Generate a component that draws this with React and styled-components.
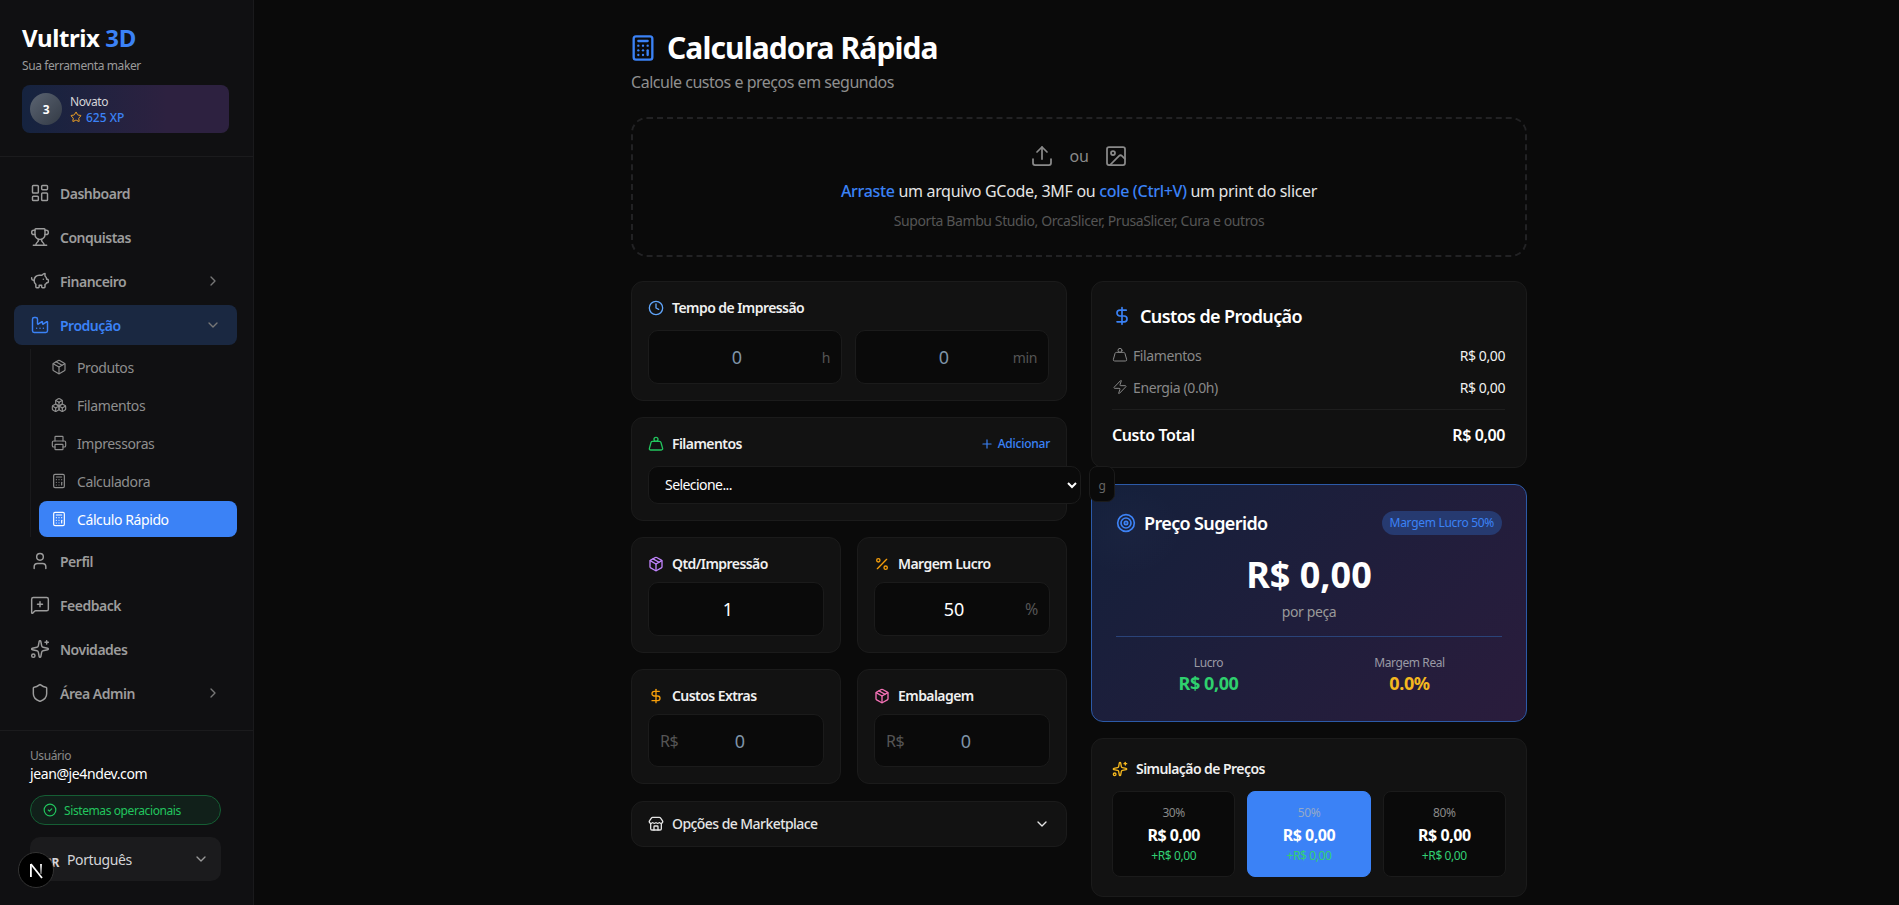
import styled, { createGlobalStyle } from "styled-components";
import {
  Boxes,
  Calculator,
  ChevronDown,
  ChevronRight,
  CircleCheck,
  Clock,
  DollarSign,
  Factory,
  Image,
  LayoutDashboard,
  MessageSquarePlus,
  Package,
  Percent,
  PiggyBank,
  Plus,
  Printer,
  Shield,
  Sparkles,
  Star,
  Store,
  Target,
  Trophy,
  Upload,
  User,
  Weight,
  Zap,
} from "lucide-react";

const GlobalStyle = createGlobalStyle`
  * { box-sizing: border-box; }
  html, body { margin: 0; height: 100%; background: #0a0a0a; }
  body {
    font-family: "Noto Sans", "Open Sans", sans-serif;
    letter-spacing: -0.025em;
    color: #fff;
    overflow: hidden;
  }
`;

const Page = styled.div`
  display: flex;
  height: 905px;
  overflow: hidden;
`;

const Sidebar = styled.aside`
  width: 254px;
  flex-shrink: 0;
  display: flex;
  flex-direction: column;
  background: #101012;
  border-right: 1px solid #1a1a1c;
`;

const Brand = styled.div`
  padding: 22px 24px 23px 22px;
  border-bottom: 1px solid #1b1b1d;
`;

const Logo = styled.div`
  font-size: 24px;
  line-height: 32px;
  font-weight: 700;
  span { color: #3b82f6; }
`;

const Tagline = styled.div`
  margin-top: 4px;
  font-size: 12px;
  line-height: 16px;
  color: #9a9a9a;
`;

const LevelCard = styled.div`
  margin-top: 11px;
  height: 48px;
  padding: 0 8px;
  display: flex;
  align-items: center;
  gap: 8px;
  border-radius: 8px;
  background: linear-gradient(90deg, #15233f, #2d2140 70%, #2d2140);
`;

const LevelBadge = styled.div`
  width: 32px;
  height: 32px;
  border-radius: 50%;
  display: flex;
  align-items: center;
  justify-content: center;
  font-size: 12px;
  font-weight: 700;
  background: linear-gradient(135deg, #5b6472, #333a45);
`;

const LevelName = styled.div`
  font-size: 12px;
  line-height: 16px;
  color: #d4d4d8;
`;

const LevelXp = styled.div`
  display: flex;
  align-items: center;
  gap: 4px;
  font-size: 12px;
  line-height: 15px;
  font-weight: 500;
  letter-spacing: 0;
  color: #3b82f6;
  svg { color: #f5a524; }
`;

const Nav = styled.nav`
  flex: 1;
  padding: 16px 16px 16px 14px;
  display: flex;
  flex-direction: column;
  gap: 4px;
`;

const NavItem = styled.div`
  height: 40px;
  padding: 0 16px;
  display: flex;
  align-items: center;
  gap: 10px;
  border-radius: 8px;
  font-size: 14px;
  font-weight: 600;
  letter-spacing: -0.035em;
  color: ${(p) => (p.$active ? "#3b82f6" : "#9c9c9c")};
  background: ${(p) => (p.$active ? "#1a2841" : "transparent")};
  > svg:last-child:not(:first-child) {
    margin-left: auto;
    color: #777;
  }
`;

const SubList = styled.div`
  margin-left: 16px;
  padding-left: 8px;
  border-left: 1px solid #1a1a1c;
  display: flex;
  flex-direction: column;
  gap: 2px;
`;

const SubItem = styled.div`
  height: 36px;
  padding: 0 12px;
  display: flex;
  align-items: center;
  gap: 10px;
  border-radius: 8px;
  font-size: 14px;
  color: ${(p) => (p.$active ? "#fff" : "#8e8e8e")};
  background: ${(p) => (p.$active ? "#3b82f6" : "transparent")};
`;

const SideFooter = styled.div`
  padding: 17px 32px 0 30px;
  border-top: 1px solid #1b1b1d;
  height: 175px;
`;

const UserLabel = styled.div`
  font-size: 12px;
  line-height: 16px;
  color: #8a8a8a;
`;

const UserMail = styled.div`
  font-size: 14px;
  line-height: 20px;
  color: #fff;
`;

const StatusPill = styled.div`
  margin-top: 11px;
  height: 30px;
  padding: 0 12px;
  display: flex;
  align-items: center;
  gap: 7px;
  border-radius: 15px;
  font-size: 12px;
  color: #22c55e;
  background: #11201a;
  border: 1px solid #155e34;
`;

const LangSelect = styled.div`
  margin-top: 12px;
  height: 44px;
  padding: 0 12px 0 14px;
  display: flex;
  align-items: center;
  border-radius: 10px;
  background: #1b1b1d;
  font-size: 14px;
  color: #d4d4d8;
  b {
    width: 23px;
    font-size: 12px;
    padding-top: 6px;
  }
  svg {
    margin-left: auto;
    color: #999;
  }
`;

const DevBadge = styled.div`
  position: absolute;
  left: 18px;
  top: 852px;
  width: 36px;
  height: 36px;
  border-radius: 50%;
  background: #000;
  border: 1px solid #333;
  svg { display: block; }
`;

const Main = styled.main`
  flex: 1;
  min-width: 0;
  padding: 30px 0 0 5px;
`;

const Content = styled.div`
  width: 896px;
  margin: 0 auto;
`;

const PageTitle = styled.h1`
  margin: 0;
  display: flex;
  align-items: center;
  gap: 10px;
  font-size: 30px;
  line-height: 36px;
  font-weight: 700;
  letter-spacing: -0.03em;
  svg {
    margin-left: -2px;
    color: #3b82f6;
  }
`;

const PageSubtitle = styled.p`
  margin: 4px 0 0;
  font-size: 16px;
  line-height: 24px;
  letter-spacing: -0.03em;
  color: #8f8f8f;
`;

const DropZone = styled.div`
  margin-top: 23px;
  height: 140px;
  display: flex;
  flex-direction: column;
  align-items: center;
  padding-top: 25px;
  border: 2px dashed #222224;
  border-radius: 16px;
`;

const DropIcons = styled.div`
  display: flex;
  align-items: center;
  gap: 16px;
  height: 24px;
  color: #8a8a8a;
  font-size: 16px;
`;

const DropText = styled.div`
  margin-top: 11px;
  font-size: 16px;
  line-height: 24px;
  letter-spacing: -0.02em;
  color: #e5e5e5;
  strong {
    color: #3b82f6;
    font-weight: 500;
  }
`;

const DropHint = styled.div`
  margin-top: 8px;
  font-size: 14px;
  line-height: 20px;
  color: #555;
`;

const Columns = styled.div`
  margin-top: 24px;
  display: grid;
  grid-template-columns: 436px 436px;
  gap: 24px;
  align-items: start;
`;

const Stack = styled.div`
  display: flex;
  flex-direction: column;
  gap: 16.2px;
`;

const Pair = styled.div`
  display: grid;
  grid-template-columns: 210px 210px;
  gap: 16px;
`;

const Card = styled.section`
  padding: 16px;
  border-radius: 12px;
  background: #121212;
  border: 1px solid #1b1b1b;
`;

const CardHead = styled.div`
  height: 20px;
  margin-bottom: ${(p) => p.$gap || 8}px;
  display: flex;
  align-items: center;
  gap: 8px;
  font-size: 14px;
  line-height: 20px;
  font-weight: 600;
  letter-spacing: -0.04em;
  color: #f0f0f0;
`;

const AddLink = styled.span`
  margin-left: auto;
  display: flex;
  align-items: center;
  gap: 4px;
  font-size: 12px;
  font-weight: 500;
  letter-spacing: -0.02em;
  color: #3b82f6;
`;

const FieldRow = styled.div`
  display: grid;
  grid-template-columns: 194px 194px;
  gap: 13px;
`;

const Field = styled.div`
  position: relative;
`;

const NumberInput = styled.input`
  width: 100%;
  height: 53.6px;
  padding: 0 32px 0 ${(p) => (p.$prefixed ? 40 : 16)}px;
  text-align: center;
  font-family: inherit;
  font-size: 18px;
  color: #fff;
  background: #0a0a0a;
  border: 1px solid #1b1b1b;
  border-radius: 10px;
  outline: none;
  &::placeholder {
    color: #7f93a8;
    opacity: 1;
  }
`;

const Affix = styled.span`
  position: absolute;
  top: 50%;
  transform: translateY(-50%);
  ${(p) => (p.$left ? "left: 12px;" : "right: 12px;")}
  font-size: ${(p) => p.$size || 14}px;
  color: #555;
`;

const FilamentRow = styled.div`
  display: flex;
  gap: 8px;
`;

const FilamentSelect = styled.select`
  width: 433px;
  flex-shrink: 0;
  height: 38px;
  padding: 0 12px;
  font-family: inherit;
  font-size: 14px;
  letter-spacing: -0.04em;
  color: #fff;
  background: #0a0a0a;
  border: 1px solid #1b1b1b;
  border-radius: 10px;
  outline: none;
  color-scheme: dark;
`;

const UnitBox = styled.div`
  width: 26px;
  height: 36px;
  padding-top: 4px;
  flex-shrink: 0;
  display: flex;
  align-items: center;
  justify-content: center;
  font-size: 12px;
  color: #666;
  background: #0a0a0a;
  border: 1px solid #1b1b1b;
  border-radius: 8px;
  position: relative;
  z-index: 2;
`;

const Collapse = styled.section`
  height: 46px;
  padding: 0 16px;
  display: flex;
  align-items: center;
  gap: 8px;
  font-size: 14px;
  font-weight: 500;
  letter-spacing: -0.04em;
  color: #e5e5e5;
  border-radius: 12px;
  background: #121212;
  border: 1px solid #1b1b1b;
  > svg:last-child { margin-left: auto; }
`;

const CostCard = styled(Card)`
  height: 186.5px;
  padding: 20px 21px 20px 20px;
  background: #111;
`;

const CostTitle = styled.h2`
  margin: 0 0 15px;
  display: flex;
  align-items: center;
  gap: 8px;
  font-size: 18px;
  line-height: 28px;
  font-weight: 600;
  letter-spacing: -0.035em;
  svg { color: #3b82f6; }
`;

const CostRow = styled.div`
  height: 20px;
  margin-bottom: 12px;
  display: flex;
  align-items: center;
  justify-content: space-between;
  font-size: 14px;
  color: #f0f0f0;
`;

const CostLabel = styled.span`
  display: flex;
  align-items: center;
  gap: 5px;
  color: #888;
`;

const CostTotal = styled.div`
  margin-top: 1px;
  padding-top: 13px;
  display: flex;
  justify-content: space-between;
  font-size: 16px;
  line-height: 24px;
  font-weight: 600;
  border-top: 1px solid #1e1e1e;
`;

const PriceCard = styled.section`
  position: relative;
  overflow: hidden;
  height: 238.5px;
  padding: 24px;
  border-radius: 12px;
  border: 1px solid #2c5aa8;
  background: linear-gradient(135deg, #14203b, #2a1c3c);
`;

const PriceGlow = styled.div`
  position: absolute;
  top: 0;
  left: -20px;
  width: 110px;
  height: 90px;
  border-radius: 50%;
  background: radial-gradient(closest-side, rgba(120, 140, 190, 0.03), transparent);
  pointer-events: none;
`;

const PriceHead = styled.div`
  display: flex;
  align-items: center;
  gap: 8px;
  height: 28px;
  font-size: 18px;
  font-weight: 600;
  letter-spacing: -0.035em;
  svg { color: #3b82f6; }
`;

const MarginTag = styled.span`
  margin-left: auto;
  height: 24px;
  padding: 0 8px;
  display: flex;
  align-items: center;
  font-size: 12px;
  font-weight: 400;
  letter-spacing: -0.025em;
  color: #3b82f6;
  background: #263a70;
  border-radius: 12px;
`;

const BigPrice = styled.div`
  margin-top: 14px;
  text-align: center;
  font-size: 36px;
  line-height: 48px;
  font-weight: 700;
  letter-spacing: 0;
`;

const PerPiece = styled.div`
  margin-top: 3px;
  text-align: center;
  font-size: 14px;
  line-height: 20px;
  color: #999;
`;

const PriceStats = styled.div`
  margin-top: 14px;
  padding-top: 18px;
  display: grid;
  grid-template-columns: 1fr 1fr;
  gap: 16px;
  border-top: 1px solid #2a4379;
  text-align: center;
`;

const StatLabel = styled.div`
  font-size: 12px;
  line-height: 16px;
  color: #9a9aa5;
`;

const StatValue = styled.div`
  font-size: 18px;
  line-height: 24px;
  font-weight: 700;
  color: ${(p) => p.$color};
`;

const SimCard = styled(Card)`
  height: 159px;
  padding: 20px;
`;

const SimGrid = styled.div`
  display: grid;
  grid-template-columns: repeat(3, 1fr);
  gap: 12px;
`;

const SimCell = styled.div`
  height: 86px;
  padding-top: 13px;
  text-align: center;
  border-radius: 8px;
  background: ${(p) => (p.$active ? "#3b82f6" : "#0a0a0a")};
  border: 1px solid ${(p) => (p.$active ? "#3b82f6" : "#1b1b1b")};
`;

const SimPercent = styled.div`
  font-size: 12px;
  line-height: 16px;
  color: ${(p) => (p.$active ? "#93a9c9" : "#888")};
`;

const SimPrice = styled.div`
  margin-top: 4px;
  font-size: 16px;
  line-height: 20px;
  font-weight: 700;
  letter-spacing: -0.03em;
`;

const SimGain = styled.div`
  margin-top: 1px;
  font-size: 12px;
  line-height: 20px;
  color: #32d074;
`;

const mainNav = [
  { label: "Dashboard", icon: LayoutDashboard },
  { label: "Conquistas", icon: Trophy },
  { label: "Financeiro", icon: PiggyBank, chevron: true },
];

const subNav = [
  { label: "Produtos", icon: Package },
  { label: "Filamentos", icon: Boxes },
  { label: "Impressoras", icon: Printer },
  { label: "Calculadora", icon: Calculator },
  { label: "Cálculo Rápido", icon: Calculator, active: true },
];

const lowerNav = [
  { label: "Perfil", icon: User },
  { label: "Feedback", icon: MessageSquarePlus },
  { label: "Novidades", icon: Sparkles },
  { label: "Área Admin", icon: Shield, chevron: true },
];

const simulations = [
  { percent: "30%" },
  { percent: "50%", active: true },
  { percent: "80%" },
];

function MenuLink({ item }) {
  const Icon = item.icon;
  return (
    <NavItem>
      <Icon size={20} strokeWidth={1.75} />
      {item.label}
      {item.chevron && <ChevronRight size={16} />}
    </NavItem>
  );
}

// the dev tools logo, right stem fades out like the real one
function DevLogo() {
  return (
    <svg width="34" height="34" viewBox="0 0 34 34">
      <defs>
        <linearGradient id="devFade" gradientUnits="userSpaceOnUse" x1="0" y1="11" x2="0" y2="21">
          <stop offset="0" stopColor="#fff" />
          <stop offset="1" stopColor="#fff" stopOpacity="0.35" />
        </linearGradient>
      </defs>
      <path d="M11.9 11v13" stroke="#fff" strokeWidth="1.8" />
      <path d="M11.9 11L23 25" stroke="#fff" strokeWidth="1.8" />
      <path d="M22 11v10" stroke="url(#devFade)" strokeWidth="1.8" />
    </svg>
  );
}

function App() {
  return (
    <Page>
      <GlobalStyle />
      <Sidebar>
        <Brand>
          <Logo>
            Vultrix <span>3D</span>
          </Logo>
          <Tagline>Sua ferramenta maker</Tagline>
          <LevelCard>
            <LevelBadge>3</LevelBadge>
            <div>
              <LevelName>Novato</LevelName>
              <LevelXp>
                <Star size={12} />
                625 XP
              </LevelXp>
            </div>
          </LevelCard>
        </Brand>
        <Nav>
          {mainNav.map((item) => (
            <MenuLink key={item.label} item={item} />
          ))}
          <NavItem $active>
            <Factory size={20} strokeWidth={1.75} />
            Produção
            <ChevronDown size={16} />
          </NavItem>
          <SubList>
            {subNav.map(({ label, icon: Icon, active }) => (
              <SubItem key={label} $active={active}>
                <Icon size={16} strokeWidth={1.75} />
                {label}
              </SubItem>
            ))}
          </SubList>
          {lowerNav.map((item) => (
            <MenuLink key={item.label} item={item} />
          ))}
        </Nav>
        <SideFooter>
          <UserLabel>Usuário</UserLabel>
          <UserMail>jean@je4ndev.com</UserMail>
          <StatusPill>
            <CircleCheck size={14} />
            Sistemas operacionais
          </StatusPill>
          <LangSelect>
            <b>BR</b>
            Português
            <ChevronDown size={16} />
          </LangSelect>
        </SideFooter>
      </Sidebar>
      <DevBadge>
        <DevLogo />
      </DevBadge>

      <Main>
        <Content>
          <PageTitle>
            <Calculator size={28} />
            Calculadora Rápida
          </PageTitle>
          <PageSubtitle>Calcule custos e preços em segundos</PageSubtitle>

          <DropZone>
            <DropIcons>
              <Upload size={24} strokeWidth={1.75} />
              ou
              <Image size={24} strokeWidth={1.75} />
            </DropIcons>
            <DropText>
              <strong>Arraste</strong> um arquivo GCode, 3MF ou{" "}
              <strong>cole (Ctrl+V)</strong> um print do slicer
            </DropText>
            <DropHint>Suporta Bambu Studio, OrcaSlicer, PrusaSlicer, Cura e outros</DropHint>
          </DropZone>

          <Columns>
            <Stack>
              <Card>
                <CardHead $gap={12}>
                  <Clock size={16} color="#60a5fa" />
                  Tempo de Impressão
                </CardHead>
                <FieldRow>
                  <Field>
                    <NumberInput placeholder="0" readOnly />
                    <Affix>h</Affix>
                  </Field>
                  <Field>
                    <NumberInput placeholder="0" readOnly />
                    <Affix>min</Affix>
                  </Field>
                </FieldRow>
              </Card>

              <Card>
                <CardHead $gap={12}>
                  <Weight size={16} color="#22c55e" />
                  Filamentos
                  <AddLink>
                    <Plus size={14} />
                    Adicionar
                  </AddLink>
                </CardHead>
                <FilamentRow>
                  <FilamentSelect defaultValue="">
                    <option value="">Selecione...</option>
                  </FilamentSelect>
                  <UnitBox>g</UnitBox>
                </FilamentRow>
              </Card>

              <Pair>
                <Card>
                  <CardHead>
                    <Package size={16} color="#c084fc" />
                    Qtd/Impressão
                  </CardHead>
                  <NumberInput defaultValue="1" readOnly />
                </Card>
                <Card>
                  <CardHead>
                    <Percent size={16} color="#f59e0b" />
                    Margem Lucro
                  </CardHead>
                  <Field>
                    <NumberInput defaultValue="50" readOnly />
                    <Affix $size={16}>%</Affix>
                  </Field>
                </Card>
              </Pair>

              <Pair>
                <Card>
                  <CardHead>
                    <DollarSign size={16} color="#f59e0b" />
                    Custos Extras
                  </CardHead>
                  <Field>
                    <Affix $left $size={16}>R$</Affix>
                    <NumberInput $prefixed placeholder="0" readOnly />
                  </Field>
                </Card>
                <Card>
                  <CardHead>
                    <Package size={16} color="#f472b6" />
                    Embalagem
                  </CardHead>
                  <Field>
                    <Affix $left $size={16}>R$</Affix>
                    <NumberInput $prefixed placeholder="0" readOnly />
                  </Field>
                </Card>
              </Pair>

              <Collapse>
                <Store size={16} />
                Opções de Marketplace
                <ChevronDown size={16} />
              </Collapse>
            </Stack>

            <Stack>
              <CostCard>
                <CostTitle>
                  <DollarSign size={20} />
                  Custos de Produção
                </CostTitle>
                <CostRow>
                  <CostLabel>
                    <Weight size={16} strokeWidth={1.5} />
                    Filamentos
                  </CostLabel>
                  R$ 0,00
                </CostRow>
                <CostRow>
                  <CostLabel>
                    <Zap size={16} strokeWidth={1.5} />
                    Energia (0.0h)
                  </CostLabel>
                  R$ 0,00
                </CostRow>
                <CostTotal>
                  <span>Custo Total</span>
                  <span>R$ 0,00</span>
                </CostTotal>
              </CostCard>

              <PriceCard>
                <PriceGlow />
                <PriceHead>
                  <Target size={20} />
                  Preço Sugerido
                  <MarginTag>Margem Lucro 50%</MarginTag>
                </PriceHead>
                <BigPrice>R$ 0,00</BigPrice>
                <PerPiece>por peça</PerPiece>
                <PriceStats>
                  <div>
                    <StatLabel>Lucro</StatLabel>
                    <StatValue $color="#2fd06e">R$ 0,00</StatValue>
                  </div>
                  <div>
                    <StatLabel>Margem Real</StatLabel>
                    <StatValue $color="#f5b81f">0.0%</StatValue>
                  </div>
                </PriceStats>
              </PriceCard>

              <SimCard>
                <CardHead $gap={12}>
                  <Sparkles size={16} color="#f5b81f" />
                  Simulação de Preços
                </CardHead>
                <SimGrid>
                  {simulations.map(({ percent, active }) => (
                    <SimCell key={percent} $active={active}>
                      <SimPercent $active={active}>{percent}</SimPercent>
                      <SimPrice>R$ 0,00</SimPrice>
                      <SimGain>+R$ 0,00</SimGain>
                    </SimCell>
                  ))}
                </SimGrid>
              </SimCard>
            </Stack>
          </Columns>
        </Content>
      </Main>
    </Page>
  );
}

export default App;
